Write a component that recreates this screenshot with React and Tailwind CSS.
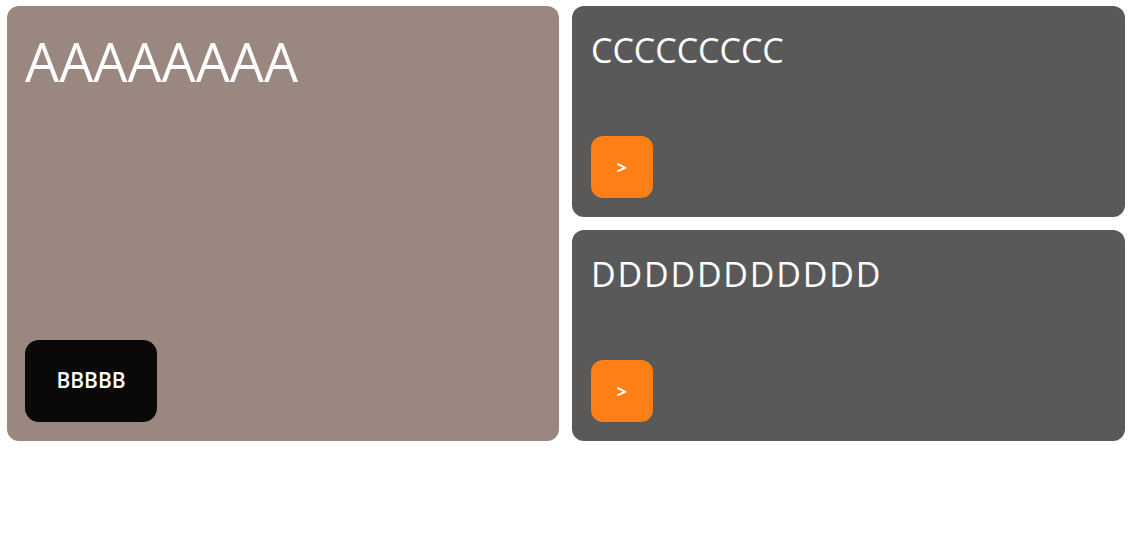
export default function App() {
  return (
    <div
      className="w-[1133px] h-[538px] bg-white"
      style={{ fontFamily: '"Open Sans", "Noto Sans", sans-serif' }}
    >
      <div className="grid grid-cols-[552px_553px] gap-[13px] pl-[7px] pt-[6px] h-[441px]">
        <div className="bg-[#998780] rounded-[12px] pt-[18px] px-[18px] pb-[19px] flex flex-col justify-between">
          <h1 className="text-white text-[54px] leading-none mt-[10px]">AAAAAAAA</h1>
          <button className="bg-[#0a0908] text-white font-semibold text-[21px] rounded-[14px] w-[132px] h-[82px] flex items-center justify-center">
            BBBBB
          </button>
        </div>
        <div className="grid grid-rows-2 gap-[13px]">
          <div className="bg-[#595959] rounded-[12px] p-[19px] flex flex-col justify-between">
            <h2 className="text-white text-[34px] leading-none mt-[8px]">CCCCCCCCC</h2>
            <button className="bg-[#fd7f16] text-white font-bold text-[18px] rounded-[12px] w-[62px] h-[62px] flex items-center justify-center">
              &gt;
            </button>
          </div>
          <div className="bg-[#595959] rounded-[12px] p-[19px] flex flex-col justify-between">
            <h2 className="text-white text-[34px] leading-none mt-[8px] tracking-[1.8px]">DDDDDDDDDDD</h2>
            <button className="bg-[#fd7f16] text-white font-bold text-[18px] rounded-[12px] w-[62px] h-[62px] flex items-center justify-center">
              &gt;
            </button>
          </div>
        </div>
      </div>
    </div>
  );
}
